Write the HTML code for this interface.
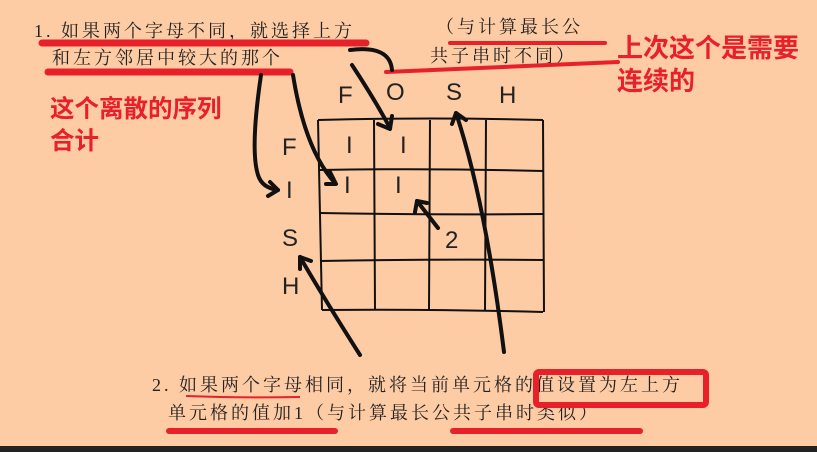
<!DOCTYPE html>
<html><head><meta charset="utf-8"><style>
html,body{margin:0;padding:0;}
body{width:817px;height:452px;background:#fdcba4;overflow:hidden;position:relative;font-family:"Liberation Sans","Noto Sans CJK SC",sans-serif;}
svg{position:absolute;left:0;top:0;}
.h{font-family:"Liberation Serif","Noto Serif CJK SC",serif;font-size:18px;fill:#222;letter-spacing:3px;}
.r{font-family:"Liberation Sans","Noto Sans CJK SC",sans-serif;font-weight:bold;fill:#e8202a;}
.g{font-family:"Liberation Sans","Noto Sans CJK SC",sans-serif;font-size:24px;fill:#222;}
</style></head><body>
<svg width="817" height="452" viewBox="0 0 817 452">
<text class="h" x="34" y="37">1. 如果两个字母不同，就选择上方</text>
<text class="h" x="52" y="64">和左方邻居中较大的那个</text>
<text class="h" x="436" y="33">（与计算最长公</text>
<text class="h" x="430" y="62">共子串时不同）</text>
<path d="M42 43 L366 43" stroke="#e8202a" stroke-width="7" stroke-linecap="round"/>
<path d="M48 72 L290 72" stroke="#e8202a" stroke-width="7" stroke-linecap="round"/>
<path d="M450 43 L605 43" stroke="#e8202a" stroke-width="4" stroke-linecap="round"/>
<path d="M386 72 L618 62" stroke="#e8202a" stroke-width="4" stroke-linecap="round"/>
<text class="r" x="50" y="117" font-size="24.5">这个离散的序列</text>
<text class="r" x="50" y="149" font-size="24.5">合计</text>
<text class="r" x="617" y="57" font-size="26">上次这个是需要</text>
<text class="r" x="617" y="90" font-size="26">连续的</text>
<g stroke="#111" stroke-width="2" fill="none">
<path d="M318 120 Q430 117 543 120 M320 170 Q430 168 543 171 M320 213 Q430 215 543 214 M320 261 Q430 259 543 260 M322 310 Q430 309 543 312"/>
<path d="M318 120 L322 310 M374 120 L375 309 M430 120 L429 309 M486 120 L485 310 M543 120 L544 312"/>
</g>
<text class="g" x="338" y="103">F</text><text class="g" x="386" y="100">O</text><text class="g" x="446" y="100">S</text><text class="g" x="499" y="103">H</text>
<text class="g" x="282" y="155">F</text><text class="g" x="286" y="198">I</text><text class="g" x="282" y="246">S</text><text class="g" x="282" y="294">H</text>
<text class="g" x="346" y="153">I</text><text class="g" x="400" y="153">I</text><text class="g" x="344" y="193" font-size="18">I</text><text class="g" x="395" y="193" font-size="18">I</text>
<text class="g" x="445" y="248">2</text>
<g stroke="#111" stroke-width="4" fill="none" stroke-linecap="round" stroke-linejoin="round">
<path d="M261 75 Q250 150 258 175 Q262 188 278 190"/><path d="M270 182 L278 190 L268 196"/>
<path d="M293 75 Q305 150 335 183"/><path d="M330 172 L336 184 L326 184"/>
<path d="M350 50 Q390 45 392 70"/>
<path d="M352 65 Q375 100 390 128"/><path d="M378 124 L390 129 L392 116"/>
<path d="M438 228 L417 201"/><path d="M415 212 L417 201 L427 203"/>
<path d="M504 352 Q485 200 456 113"/><path d="M452 124 L456 113 L466 120"/>
<path d="M360 355 Q325 300 300 257"/><path d="M300 269 L300 257 L311 261"/>
</g>
<text class="h" x="152" y="391">2. 如果两个字母相同，就将当前单元格的值设置为左上方</text>
<text class="h" x="168" y="419">单元格的值加1（与计算最长公共子串时类似）</text>
<path d="M186 396 Q240 398 300 397" stroke="#e8202a" stroke-width="2" fill="none"/>
<rect x="536" y="372" width="170" height="33" rx="3" fill="none" stroke="#e8202a" stroke-width="6"/>
<path d="M169 431 L335 431" stroke="#e8202a" stroke-width="6" stroke-linecap="round"/>
<path d="M453 431 L640 431" stroke="#e8202a" stroke-width="6" stroke-linecap="round"/>
<rect x="0" y="446" width="817" height="6" fill="#222"/>
</svg>
</body></html>
